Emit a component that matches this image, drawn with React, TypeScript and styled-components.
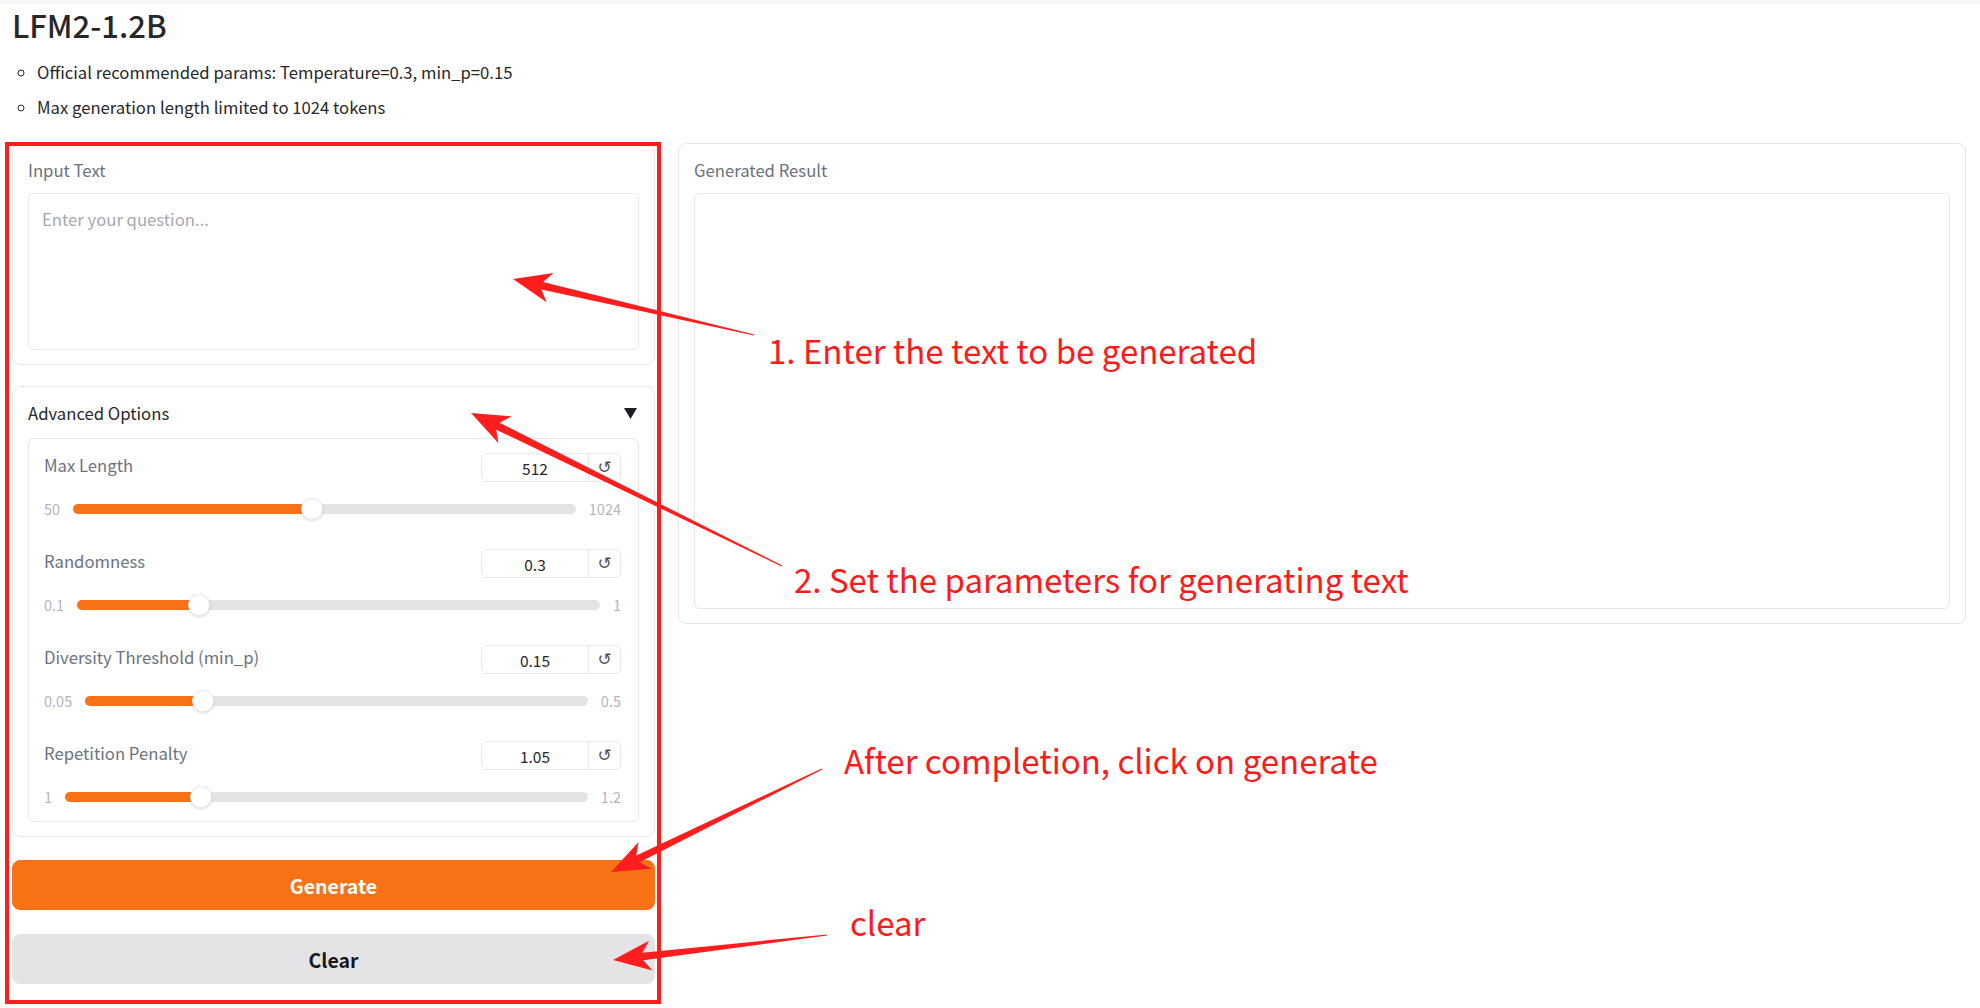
import React from 'react';
import styled, { createGlobalStyle } from 'styled-components';

const GlobalStyle = createGlobalStyle`
  html, body {
    margin: 0;
    padding: 0;
    background: #fff;
  }
  body {
    font-family: "Noto Sans CJK SC", "Noto Sans", sans-serif;
    color: #27272a;
  }
  * { box-sizing: border-box; }
`;

const Page = styled.div`
  position: relative;
  width: 1980px;
  height: 1008px;
  overflow: hidden;
  background: #fff;
`;

const TopStrip = styled.div`
  height: 4px;
  background: #f7f7fa;
`;

const Header = styled.header`
  padding-left: 12px;
`;

const Title = styled.h1`
  margin: 0;
  font-size: 31px;
  line-height: 42px;
  font-weight: 500;
  color: #27272a;
`;

const Notes = styled.ul`
  margin: 9px 0 0;
  padding-left: 25px;
  list-style: circle;
  font-size: 16.7px;
  line-height: 35px;
  color: #27272a;
`;

const Row = styled.main`
  display: flex;
  align-items: flex-start;
  gap: 23px;
  margin-top: 18px;
  padding: 0 14px 0 12px;
`;

const LeftCol = styled.div`
  width: 643px;
  flex: none;
  display: flex;
  flex-direction: column;
  gap: 21px;
`;

const RightCol = styled.div`
  flex: 1;
`;

const Block = styled.section`
  border: 1px solid #e5e7eb;
  border-radius: 8px;
  background: #fff;
  padding: 15px 15px 14px;
`;

const BlockLabel = styled.div`
  font-size: 16.7px;
  line-height: 22px;
  color: #6b7280;
  margin-bottom: 12px;
`;

const TextArea = styled.textarea`
  display: block;
  width: 100%;
  height: 157px;
  border: 1px solid #e5e7eb;
  border-radius: 6px;
  padding: 13px 13px;
  font-family: inherit;
  font-size: 16.7px;
  line-height: 24px;
  color: #27272a;
  resize: none;
  outline: none;
  &::placeholder {
    color: #a8a8b0;
  }
`;

const OutputBox = styled.div`
  height: 416px;
  border: 1px solid #e5e7eb;
  border-radius: 6px;
`;

const AccordionHead = styled.div`
  display: flex;
  align-items: center;
  justify-content: space-between;
  height: 22px;
  margin-bottom: 14px;
  font-size: 16.7px;
  color: #27272a;
  svg {
    margin-right: 2px;
  }
`;

const Group = styled.div`
  border: 1px solid #e5e7eb;
  border-radius: 6px;
  padding: 14px 17px 13px 15px;
  display: flex;
  flex-direction: column;
  gap: 29px;
`;

const SliderWrap = styled.div`
  display: flex;
  flex-direction: column;
  gap: 16px;
`;

const SliderHead = styled.div`
  display: flex;
  justify-content: space-between;
  align-items: flex-start;
  height: 29px;
`;

const SliderLabel = styled.span`
  font-size: 16.7px;
  line-height: 24px;
  color: #6b7280;
`;

const NumberBox = styled.div`
  display: flex;
  width: 140px;
  height: 29px;
  border: 1px solid #e5e7eb;
  border-radius: 6px;
  overflow: hidden;
`;

const NumberInput = styled.input`
  width: 106px;
  border: none;
  outline: none;
  text-align: center;
  font-family: inherit;
  font-size: 15.5px;
  color: #27272a;
  background: #fff;
  padding: 0;
`;

const ResetButton = styled.button`
  flex: 1;
  border: none;
  border-left: 1px solid #e5e7eb;
  background: #fff;
  color: #52525b;
  font-family: "DejaVu Sans", sans-serif;
  font-size: 17px;
  line-height: 1;
  padding: 0;
`;

const TrackRow = styled.div`
  display: flex;
  align-items: center;
  gap: 13px;
  height: 22px;
`;

const RangeLabel = styled.span`
  font-size: 14.5px;
  line-height: 22px;
  color: #b4b4bb;
`;

const Track = styled.div`
  position: relative;
  flex: 1;
  height: 10px;
  border-radius: 5px;
  background: #e4e4e7;
`;

const Fill = styled.div<{ $frac: number }>`
  position: absolute;
  left: 0;
  top: 0;
  bottom: 0;
  width: calc((100% - 22px) * ${(p) => p.$frac} + 11px);
  border-radius: 5px;
  background: #f97316;
`;

const Thumb = styled.div<{ $frac: number }>`
  position: absolute;
  top: 50%;
  left: calc((100% - 22px) * ${(p) => p.$frac});
  width: 22px;
  height: 22px;
  transform: translateY(-50%);
  border-radius: 50%;
  background: #fff;
  border: 1px solid #ececef;
  box-shadow: 0 1px 3px rgba(0, 0, 0, 0.15);
`;

const Buttons = styled.div`
  display: flex;
  flex-direction: column;
  gap: 24px;
  margin-top: 2px;
`;

const Button = styled.button<{ $primary?: boolean }>`
  height: 50px;
  border-radius: 8px;
  border: 1px solid ${(p) => (p.$primary ? '#f97316' : '#e4e4e7')};
  background: ${(p) => (p.$primary ? '#f97316' : '#e4e4e7')};
  color: ${(p) => (p.$primary ? '#fff' : '#18181b')};
  font-family: inherit;
  font-size: 19.5px;
  font-weight: 600;
`;

// annotation layer drawn over the screenshot
const RedBox = styled.div`
  position: absolute;
  left: 5px;
  top: 142px;
  width: 656px;
  height: 862px;
  border: 4px solid #ff1e1e;
  pointer-events: none;
`;

const ArrowLayer = styled.svg`
  position: absolute;
  left: 0;
  top: 0;
  pointer-events: none;
`;

const Note = styled.div<{ $x: number; $y: number }>`
  position: absolute;
  left: ${(p) => p.$x}px;
  top: ${(p) => p.$y}px;
  font-family: "Noto Sans CJK SC", "Noto Sans", sans-serif;
  font-size: 33px;
  line-height: 33px;
  color: #ff1a1a;
  white-space: nowrap;
  pointer-events: none;
`;

type SliderProps = {
  label: string;
  value: string;
  min: number;
  max: number;
};

const Slider = ({ label, value, min, max }: SliderProps) => {
  const frac = (parseFloat(value) - min) / (max - min);
  return (
    <SliderWrap>
      <SliderHead>
        <SliderLabel>{label}</SliderLabel>
        <NumberBox>
          <NumberInput value={value} readOnly />
          <ResetButton>↺</ResetButton>
        </NumberBox>
      </SliderHead>
      <TrackRow>
        <RangeLabel>{min}</RangeLabel>
        <Track>
          <Fill $frac={frac} />
          <Thumb $frac={frac} />
        </Track>
        <RangeLabel>{max}</RangeLabel>
      </TrackRow>
    </SliderWrap>
  );
};

const arrowPoints = (x1: number, y1: number, x2: number, y2: number) => {
  const len = Math.hypot(x2 - x1, y2 - y1);
  const dx = (x2 - x1) / len;
  const dy = (y2 - y1) / len;
  const nx = -dy;
  const ny = dx;
  const H = 38;
  const W = 15;
  const bx = x2 - dx * H;
  const by = y2 - dy * H;
  const kx = x2 - dx * (H - 8);
  const ky = y2 - dy * (H - 8);
  const pts = [
    [x1 + nx * 0.6, y1 + ny * 0.6],
    [kx + nx * 3.8, ky + ny * 3.8],
    [bx + nx * W, by + ny * W],
    [x2, y2],
    [bx - nx * W, by - ny * W],
    [kx - nx * 3.8, ky - ny * 3.8],
    [x1 - nx * 0.6, y1 - ny * 0.6],
  ];
  return pts.map((p) => p.map((v) => v.toFixed(1)).join(',')).join(' ');
};

const arrows = [
  [754, 335, 513, 279],
  [782, 566, 471, 413],
  [822, 769, 611, 872],
  [827, 935, 613, 960],
];

export default function App() {
  return (
    <Page>
      <GlobalStyle />
      <TopStrip />
      <Header>
        <Title>LFM2-1.2B</Title>
        <Notes>
          <li>Official recommended params: Temperature=0.3, min_p=0.15</li>
          <li>Max generation length limited to 1024 tokens</li>
        </Notes>
      </Header>

      <Row>
        <LeftCol>
          <Block>
            <BlockLabel>Input Text</BlockLabel>
            <TextArea placeholder="Enter your question..." />
          </Block>

          <Block>
            <AccordionHead>
              <span>Advanced Options</span>
              <svg width="13" height="11" viewBox="0 0 13 11">
                <polygon points="0,0 13,0 6.5,11" fill="#1f1f23" />
              </svg>
            </AccordionHead>
            <Group>
              <Slider label="Max Length" value="512" min={50} max={1024} />
              <Slider label="Randomness" value="0.3" min={0.1} max={1} />
              <Slider label="Diversity Threshold (min_p)" value="0.15" min={0.05} max={0.5} />
              <Slider label="Repetition Penalty" value="1.05" min={1} max={1.2} />
            </Group>
          </Block>

          <Buttons>
            <Button $primary>Generate</Button>
            <Button>Clear</Button>
          </Buttons>
        </LeftCol>

        <RightCol>
          <Block>
            <BlockLabel>Generated Result</BlockLabel>
            <OutputBox />
          </Block>
        </RightCol>
      </Row>

      <RedBox />
      <ArrowLayer width="1980" height="1008" viewBox="0 0 1980 1008">
        {arrows.map(([a, b, c, d], i) => (
          <polygon key={i} points={arrowPoints(a, b, c, d)} fill="#ff1e1e" />
        ))}
      </ArrowLayer>
      <Note $x={768} $y={334}>1. Enter the text to be generated</Note>
      <Note $x={794} $y={563}>2. Set the parameters for generating text</Note>
      <Note $x={844} $y={744}>After completion, click on generate</Note>
      <Note $x={850} $y={906}>clear</Note>
    </Page>
  );
}
